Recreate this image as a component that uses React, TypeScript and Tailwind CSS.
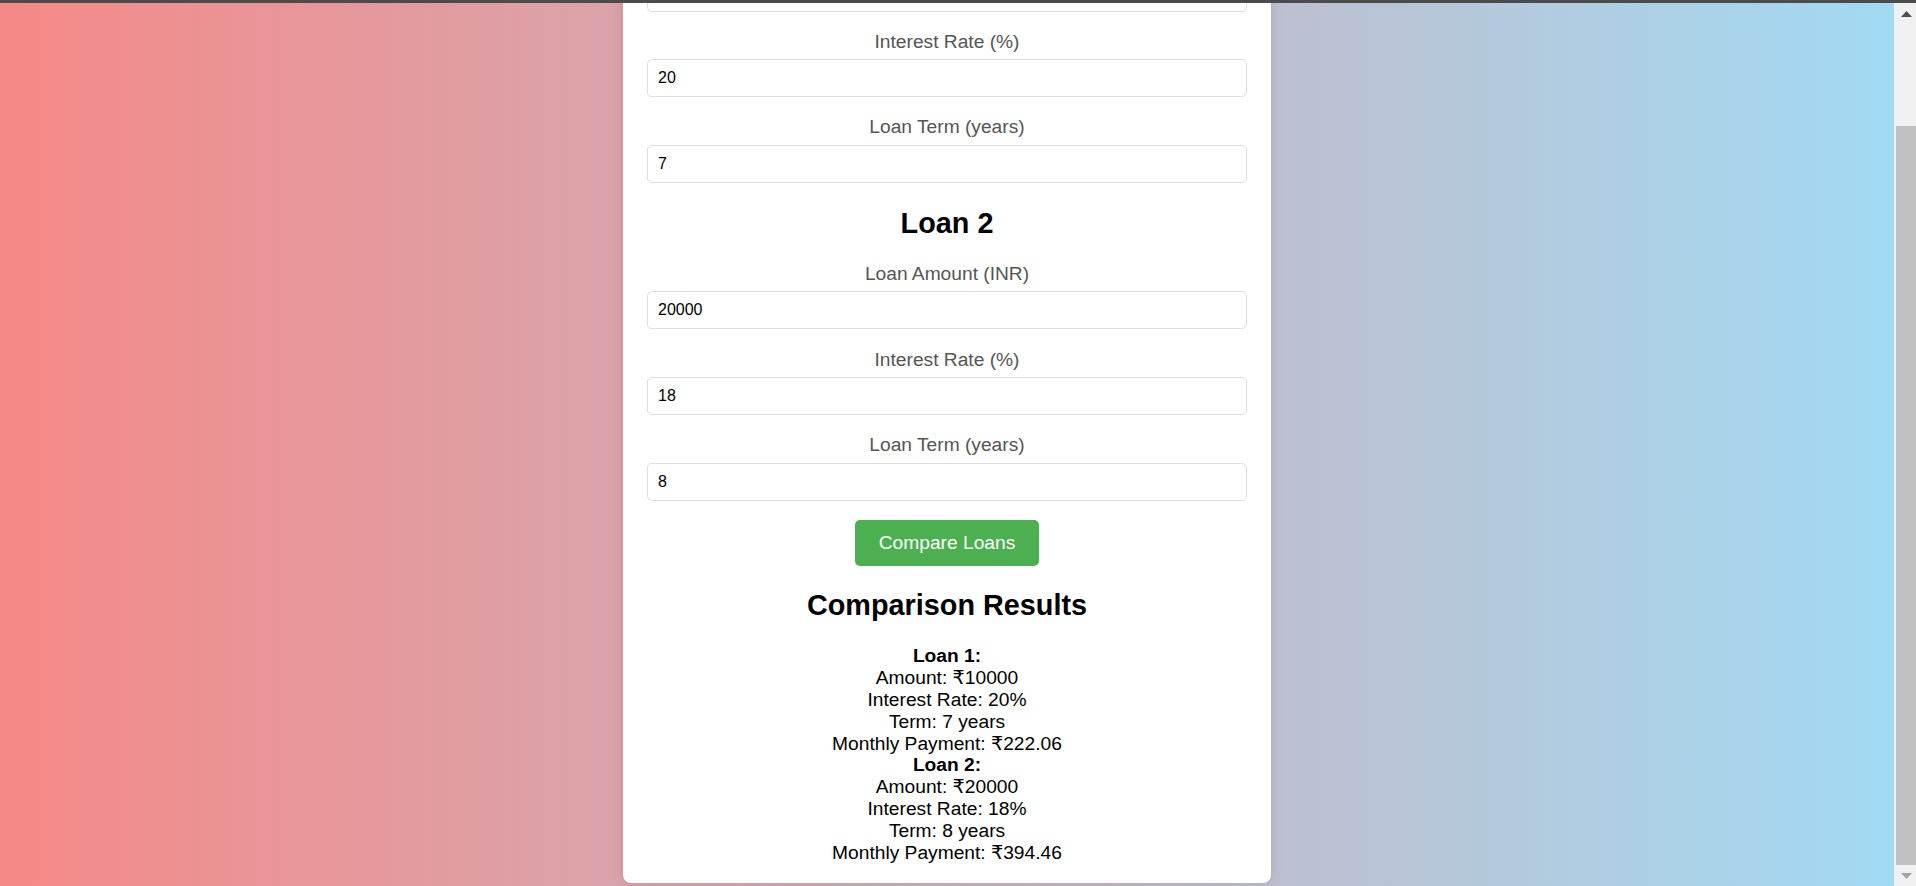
import React from "react";

const font = { fontFamily: '"Liberation Sans", Arial, "DejaVu Sans", sans-serif' };

function Field({ label, value }: { label: string; value: string }) {
  return (
    <div>
      <label className="block text-[19.2px] leading-[22px] text-[#555555] mb-[6.5px]">{label}</label>
      <input
        readOnly
        value={value}
        className="block w-full h-[38px] mb-[19.2px] px-[10px] text-[16px] text-black bg-white border border-[#dddddd] rounded-[5px] outline-none"
        style={font}
      />
    </div>
  );
}

export default function App() {
  const results = [
    { title: "Loan 1:", amount: "10000", rate: "20", term: "7", pay: "222.06" },
    { title: "Loan 2:", amount: "20000", rate: "18", term: "8", pay: "394.46" },
  ];
  return (
    <div className="h-screen w-full overflow-hidden flex flex-col" style={font}>
      <div className="h-[3px] shrink-0 bg-[#4b4b4b]" />
      <div className="flex flex-1 min-h-0">
        <main className="flex-1 min-w-0 overflow-hidden flex flex-col justify-end items-center pb-[3px] bg-[linear-gradient(to_right,#f58987,#a2daf3)]">
          <div className="w-[648px] shrink-0 bg-white rounded-[8px] px-[24px] pt-[24px] pb-[19px] text-center shadow-[0_0_12px_rgba(0,0,0,0.12)]">
            <div className="w-full h-[38px] mb-[19.2px] bg-white border border-[#dddddd] rounded-[5px]" />
            <Field label="Interest Rate (%)" value="20" />
            <Field label="Loan Term (years)" value="7" />
            <h2 className="text-[28.8px] font-bold leading-[33px] mt-[24px] mb-[23px]">Loan 2</h2>
            <Field label="Loan Amount (INR)" value="20000" />
            <Field label="Interest Rate (%)" value="18" />
            <Field label="Loan Term (years)" value="8" />
            <button
              className="h-[46px] px-[24px] bg-[#4caf50] text-white text-[19.2px] leading-[22px] rounded-[5px]"
              style={font}
            >
              Compare Loans
            </button>
            <h2 className="text-[28.8px] font-bold leading-[33px] my-[23px]">Comparison Results</h2>
            <div className="text-[19.2px] leading-[21.9px] text-black">
              {results.map((r) => (
                <div key={r.title}>
                  <div className="font-bold">{r.title}</div>
                  <div>Amount: ₹{r.amount}</div>
                  <div>Interest Rate: {r.rate}%</div>
                  <div>Term: {r.term} years</div>
                  <div>Monthly Payment: ₹{r.pay}</div>
                </div>
              ))}
            </div>
          </div>
        </main>
        <div className="w-[22px] shrink-0 bg-[#f1f1f1] flex flex-col">
          <div className="h-[21px] flex items-center justify-center pl-[2px]">
            <svg width="11" height="6" viewBox="0 0 11 6">
              <polygon points="5.5,0 11,6 0,6" fill="#505050" />
            </svg>
          </div>
          <div className="h-[102px]" />
          <div className="flex-1 ml-[2px] bg-[#c1c1c1]" />
          <div className="h-[21px] flex items-center justify-center pl-[2px]">
            <svg width="11" height="6" viewBox="0 0 11 6">
              <polygon points="0,0 11,0 5.5,6" fill="#a3a3a3" />
            </svg>
          </div>
        </div>
      </div>
    </div>
  );
}
